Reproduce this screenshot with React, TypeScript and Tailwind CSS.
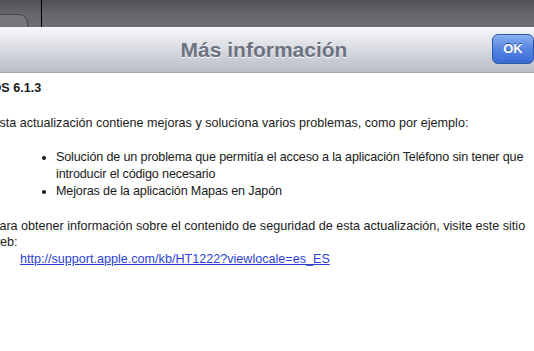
export default function App() {
  return (
    <div className="h-[351px] w-[534px] overflow-hidden bg-white font-['Liberation_Sans',Arial,sans-serif]">
      {/* dark toolbar behind the sheet */}
      <div className="relative h-[27px] bg-gradient-to-b from-[#4f5055] via-[#66676c] to-[#6d6e73]">
        <div className="absolute left-[-20px] top-[14px] h-[24px] w-[48px] rounded-[9px] border border-[#45464a] bg-[#76777c]" />
        <div className="absolute left-[41px] top-0 h-[27px] w-px bg-black" />
      </div>

      {/* sheet header */}
      <div className="relative flex h-[46px] items-center justify-center border-b border-[#a3a7b0] bg-gradient-to-b from-[#f7f8fa] to-[#b9bdc7] pr-[6px]">
        <h1 className="text-[21px] font-bold text-[#6c7280] [text-shadow:0_1px_0_#fff]">
          Más información
        </h1>
        <button className="absolute right-[0px] top-[7px] h-[30px] w-[42px] rounded-[6px] border border-[#3058a8] bg-gradient-to-b from-[#8cb0f0] via-[#5585e2] to-[#3a6bd6] text-[13px] font-bold text-white [text-shadow:0_-1px_0_#2a4f9a]">
          OK
        </button>
      </div>

      {/* body */}
      <div className="ml-[-9px] w-[554px] pt-[7px] text-[12.6px] leading-[16.5px] text-[#1a1a1a]">
        <p className="ml-[-3px] font-bold">iOS 6.1.3</p>
        <p className="mt-[18px]">
          Esta actualización contiene mejoras y soluciona varios problemas, como por ejemplo:
        </p>
        <ul className="mt-[18px] list-disc pl-[65px] tracking-[-0.15px]">
          <li>
            Solución de un problema que permitía el acceso a la aplicación Teléfono sin tener que
            introducir el código necesario
          </li>
          <li className="mt-[1px]">Mejoras de la aplicación Mapas en Japón</li>
        </ul>
        <p className="mt-[18px]">
          Para obtener información sobre el contenido de seguridad de esta actualización, visite este
          sitio web:
        </p>
        <p className="pl-[29px]">
          <a href="#" className="text-[#2b3fd4] underline">
            http://support.apple.com/kb/HT1222?viewlocale=es_ES
          </a>
        </p>
      </div>
    </div>
  );
}
